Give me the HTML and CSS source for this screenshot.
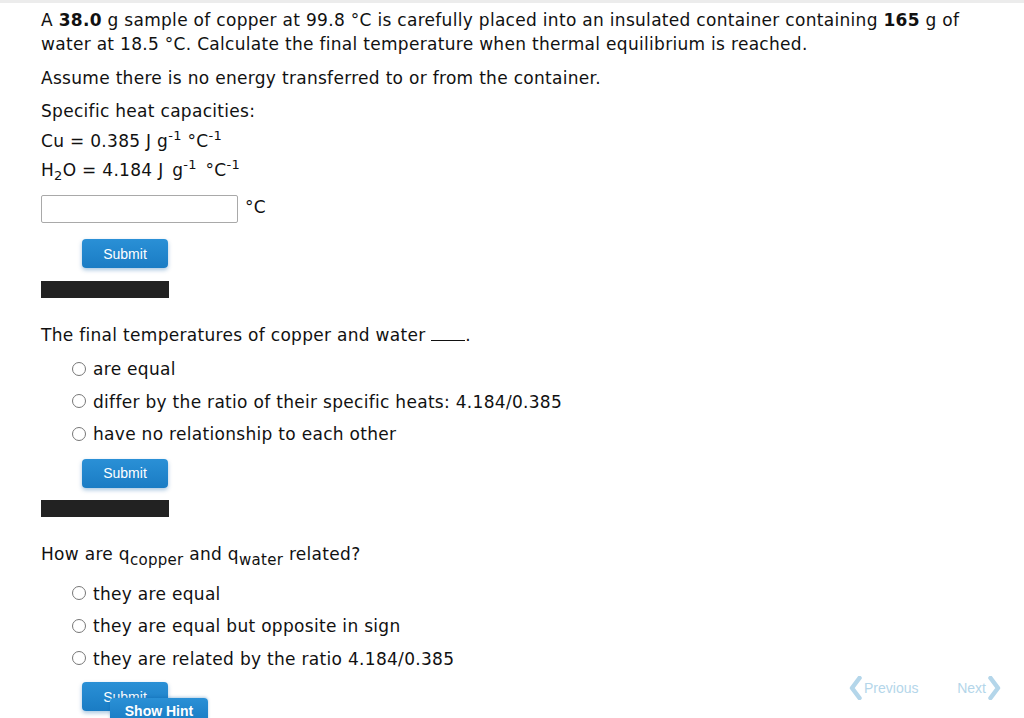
FILE: index.html
```html
<!DOCTYPE html>
<html>
<head>
<meta charset="utf-8">
<link rel="stylesheet" href="styles.css">
</head>
<body>
<div class="topbar"></div>
<div class="content">
  <p class="intro">A <b>38.0</b> g sample of copper at 99.8 °C is carefully placed into an insulated container containing <b>165</b> g of water at 18.5 °C. Calculate the final temperature when thermal equilibrium is reached.</p>
  <p class="assume">Assume there is no energy transferred to or from the container.</p>
  <div class="heats">
    <div class="heat-title">Specific heat capacities:</div>
    <div class="heat-row">Cu = 0.385 J g<sup>-1</sup> °C<sup>-1</sup></div>
    <div class="heat-row">H<sub>2</sub>O = 4.184 <span class="units-wide">J g<sup>-1</sup> °C<sup>-1</sup></span></div>
  </div>
  <div class="answer-row">
    <input class="answer" type="text">
    <span class="unit">°C</span>
  </div>
  <div class="submit-wrap first"><button class="submit">Submit</button></div>
  <div class="darkbar"></div>

  <div class="question q2">The final temperatures of copper and water <span class="blank"></span>.</div>
  <div class="options">
    <label class="option"><span class="radio"></span>are equal</label>
    <label class="option"><span class="radio"></span>differ by the ratio of their specific heats: 4.184/0.385</label>
    <label class="option"><span class="radio"></span>have no relationship to each other</label>
  </div>
  <div class="submit-wrap after-options"><button class="submit">Submit</button></div>
  <div class="darkbar second"></div>

  <div class="question q3">How are q<span class="qsub">copper</span> and q<span class="qsub">water</span> related?</div>
  <div class="options opts3">
    <label class="option"><span class="radio"></span>they are equal</label>
    <label class="option"><span class="radio"></span>they are equal but opposite in sign</label>
    <label class="option"><span class="radio"></span>they are related by the ratio 4.184/0.385</label>
  </div>
  <div class="submit-wrap last"><button class="submit">Submit</button></div>
</div>

<button class="hint">Show Hint</button>
<div class="pager">
  <span class="nav prev"><svg class="chev" viewBox="0 0 13 24" width="13" height="24"><path d="M10.5 2 L3 12 L10.5 22" fill="none" stroke="#b4d6ea" stroke-width="4.5" stroke-linejoin="round" stroke-linecap="round"/></svg>Previous</span>
  <span class="nav next">Next<svg class="chev" viewBox="0 0 13 24" width="13" height="24"><path d="M2.5 2 L10 12 L2.5 22" fill="none" stroke="#b4d6ea" stroke-width="4.5" stroke-linejoin="round" stroke-linecap="round"/></svg></span>
</div>
</body>
</html>
```

FILE: styles.css
```css
html, body {
  margin: 0;
  padding: 0;
  background: #fff;
}
body {
  font-family: "DejaVu Sans", Verdana, sans-serif;
  font-size: 17px;
  letter-spacing: 0.3px;
  color: #111;
  width: 1024px;
  height: 718px;
  overflow: hidden;
  position: relative;
}
.topbar {
  height: 3px;
  background: #ececec;
}
.content {
  padding: 0 40px 0 41px;
}
.intro {
  margin: 5px 0 0;
  line-height: 24px;
}
.assume {
  margin: 10px 0 0;
  line-height: 24px;
}
.heats {
  margin-top: 9px;
}
.heat-title {
  line-height: 24px;
  margin-bottom: 4px;
}
.heat-row {
  line-height: 29px;
  height: 29px;
}
.units-wide {
  word-spacing: 3px;
}
sup {
  font-size: 13px;
  vertical-align: 7px;
  line-height: 0;
  letter-spacing: 0.3px;
}
sub {
  font-size: 13px;
  vertical-align: -4px;
  line-height: 0;
}
.answer-row {
  margin-top: 10px;
  display: flex;
  align-items: flex-start;
  gap: 7px;
  height: 28px;
}
.answer {
  width: 197px;
  height: 28px;
  box-sizing: border-box;
  border: 1px solid #a9a9a9;
  border-radius: 2px;
  margin: 0;
  padding: 0 4px;
}
.unit {
  line-height: 24px;
}
.submit-wrap {
  padding-left: 41px;
}
.submit-wrap.first {
  margin-top: 16px;
}
.submit-wrap.after-options {
  margin-top: 8px;
}
.submit-wrap.last {
  margin-top: 7px;
}
.submit {
  width: 86px;
  height: 29px;
  border: none;
  border-radius: 4px;
  background: linear-gradient(#2a90d6, #1a7cc4);
  color: #fff;
  font-family: "Liberation Sans", Arial, sans-serif;
  font-size: 14px;
  box-shadow: 0 2px 4px rgba(0, 90, 160, 0.35);
  padding: 0;
  display: block;
}
.darkbar {
  width: 128px;
  height: 17px;
  background: #222;
  margin-top: 13px;
}
.darkbar.second {
  margin-top: 12px;
}
.question {
  line-height: 24px;
}
.q2 {
  margin-top: 25px;
}
.q3 {
  margin-top: 25px;
}
.blank {
  display: inline-block;
  width: 34px;
  border-bottom: 1px solid #111;
  vertical-align: 0;
}
.qsub {
  font-size: 15px;
  vertical-align: -5px;
  line-height: 0;
}
.options {
  padding-left: 31px;
  margin-top: 6px;
}
.options.opts3 {
  margin-top: 12px;
}
.option {
  display: flex;
  align-items: center;
  height: 32.5px;
  line-height: 24px;
}
.radio {
  width: 14px;
  height: 14px;
  border: 1px solid #777;
  border-radius: 50%;
  box-sizing: border-box;
  margin-right: 7px;
  margin-top: -1px;
  flex: none;
}
.hint {
  position: absolute;
  left: 110px;
  top: 698px;
  width: 98px;
  height: 24px;
  border: none;
  border-radius: 4px 4px 0 0;
  background: linear-gradient(#2a90d6, #1a7cc4);
  color: #fff;
  font-family: "Liberation Sans", Arial, sans-serif;
  font-weight: bold;
  font-size: 14px;
  letter-spacing: 0;
  padding: 2px 0 0;
  box-shadow: 0 -1px 3px rgba(0, 90, 160, 0.3);
}
.pager {
  position: absolute;
  left: 849px;
  top: 676px;
  width: 152px;
  display: flex;
  justify-content: space-between;
  align-items: center;
  font-family: "Liberation Sans", Arial, sans-serif;
  font-size: 14px;
  letter-spacing: 0;
  color: #b4d6ea;
}
.nav {
  display: flex;
  align-items: center;
  gap: 2px;
}
.chev {
  display: block;
}
```
